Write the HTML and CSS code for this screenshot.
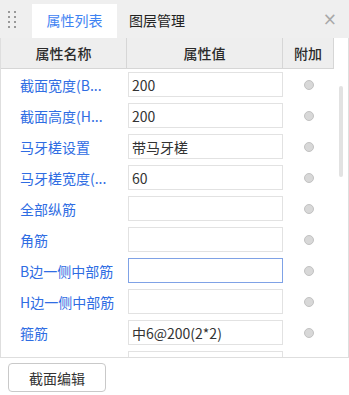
FILE: index.html
```html
<!DOCTYPE html>
<html lang="zh">
<head>
  <meta charset="UTF-8" />
  <title>属性列表</title>
  <link rel="stylesheet" href="styles.css">
</head>
<body>
  <div class="panel">
    <div class="tabbar">
      <div class="grip">
        <span></span><span></span><span></span><span></span>
        <span></span><span></span><span></span><span></span>
      </div>
      <div class="tab active">属性列表</div>
      <div class="tab">图层管理</div>
      <div class="close">×</div>
    </div>

    <div class="grid">
      <div class="row head">
        <div class="cell">属性名称</div>
        <div class="cell">属性值</div>
        <div class="cell">附加</div>
      </div>

      <div class="row">
        <div class="label">截面宽度(B...</div>
        <div class="value"><input type="text" value="200" /></div>
        <div class="extra"><span class="dot"></span></div>
      </div>
      <div class="row">
        <div class="label">截面高度(H...</div>
        <div class="value"><input type="text" value="200" /></div>
        <div class="extra"><span class="dot"></span></div>
      </div>
      <div class="row">
        <div class="label">马牙槎设置</div>
        <div class="value"><input type="text" value="带马牙槎" /></div>
        <div class="extra"><span class="dot"></span></div>
      </div>
      <div class="row">
        <div class="label">马牙槎宽度(...</div>
        <div class="value"><input type="text" value="60" /></div>
        <div class="extra"><span class="dot"></span></div>
      </div>
      <div class="row">
        <div class="label">全部纵筋</div>
        <div class="value"><input type="text" value="" /></div>
        <div class="extra"><span class="dot"></span></div>
      </div>
      <div class="row">
        <div class="label">角筋</div>
        <div class="value"><input type="text" value="" /></div>
        <div class="extra"><span class="dot"></span></div>
      </div>
      <div class="row">
        <div class="label">B边一侧中部筋</div>
        <div class="value"><input type="text" class="focus" value="" /></div>
        <div class="extra"><span class="dot"></span></div>
      </div>
      <div class="row">
        <div class="label">H边一侧中部筋</div>
        <div class="value"><input type="text" value="" /></div>
        <div class="extra"><span class="dot"></span></div>
      </div>
      <div class="row">
        <div class="label">箍筋</div>
        <div class="value"><input type="text" value="中6@200(2*2)" /></div>
        <div class="extra"><span class="dot"></span></div>
      </div>
      <div class="row">
        <div class="label"></div>
        <div class="value"><input type="text" value="" /></div>
        <div class="extra"><span class="dot"></span></div>
      </div>

      <div class="scroll"></div>
    </div>

    <div class="footer">
      <button>截面编辑</button>
    </div>
  </div>
</body>
</html>
```

FILE: styles.css
```css
:root {
  --blue: #2f6de3;
  --tab-blue: #3f83f2;
  --text: #333;
  --line: #dedede;
  --head: #eeeeee;
  --bar: #efefef;
}

body {
  margin: 0;
  font-family: "Noto Sans CJK SC", "Noto Sans", sans-serif;
  font-size: 14px;
  color: var(--text);
  background: #fff;
}

.panel {
  width: 349px;
}

.tabbar {
  height: 38px;
  background: var(--bar);
  display: flex;
  align-items: flex-end;
  box-sizing: border-box;
}

.grip {
  display: grid;
  grid-template-columns: 2px 2px;
  column-gap: 4px;
  row-gap: 3px;
  align-self: flex-start;
  margin: 11px 0 0 8px;
}

.grip span {
  width: 2px;
  height: 2px;
  background: #999;
}

.tab {
  height: 34px;
  line-height: 33px;
  padding: 0 12px;
  color: #222;
}

.tab.active {
  background: #fff;
  color: var(--tab-blue);
  margin-left: 16px;
  width: 85px;
  box-sizing: border-box;
  text-align: center;
  padding: 0;
}

.close {
  margin-left: auto;
  align-self: center;
  margin-right: 12px;
  color: #a8a8a8;
  font-size: 17px;
  font-family: "DejaVu Sans", sans-serif;
}

.grid {
  position: relative;
  height: 320px;
  box-sizing: border-box;
  border: 1px solid var(--line);
  border-top: none;
  overflow: hidden;
}

.row {
  display: grid;
  grid-template-columns: 126px 156px 51px;
  height: 31px;
  align-items: center;
}

.row.head {
  height: 31px;
  background: var(--head);
  border-bottom: 1px solid #d6d6d6;
  box-sizing: border-box;
  width: 333px;
}

.row.head .cell {
  height: 30px;
  line-height: 30px;
  text-align: center;
  border-right: 1px solid #d6d6d6;
  color: #2a2a2a;
  font-weight: 500;
}

.label {
  padding-left: 19px;
  color: var(--blue);
  white-space: nowrap;
  overflow: hidden;
}

.value input {
  display: block;
  width: 155px;
  height: 25px;
  margin-left: 1px;
  box-sizing: border-box;
  border: 1px solid #e2e2e2;
  padding: 0 3px;
  font-family: "Noto Sans CJK SC", "Noto Sans", sans-serif;
  font-size: 14px;
  color: var(--text);
  outline: none;
}

.value input.focus {
  border-color: #7fa2e6;
}

.extra {
  display: flex;
  justify-content: center;
}

.dot {
  width: 10px;
  height: 10px;
  border-radius: 50%;
  background: #d8d8d8;
  border: 1px solid #c2c2c2;
  box-sizing: border-box;
}

.scroll {
  position: absolute;
  left: 338px;
  top: 48px;
  width: 4px;
  height: 91px;
  border-radius: 2px;
  background: #e2e2e2;
}

.footer {
  padding: 5px 8px;
}

button {
  width: 98px;
  height: 29px;
  background: #fff;
  border: 1px solid #c9c9c9;
  border-radius: 4px;
  font-family: "Noto Sans CJK SC", "Noto Sans", sans-serif;
  font-size: 14px;
  color: var(--text);
  padding: 0;
}
```
